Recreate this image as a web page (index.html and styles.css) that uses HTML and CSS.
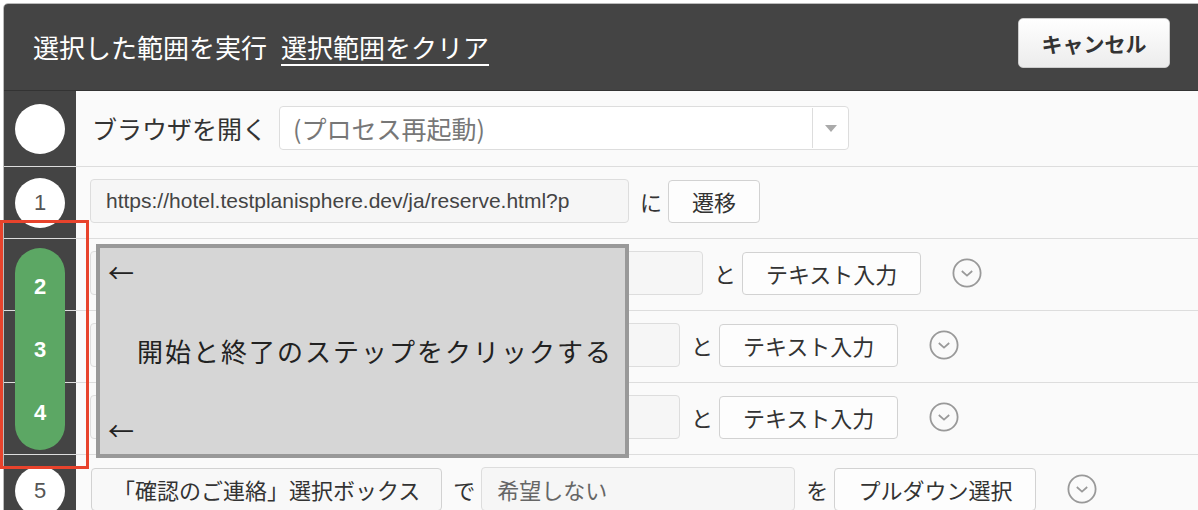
FILE: index.html
```html
<!DOCTYPE html>
<html lang="ja">
<head>
    <meta charset="UTF-8">
    <title>ステップ範囲の選択</title>
    <link rel="stylesheet" href="styles.css">
</head>
<body>
    <div class="panel">
        <header class="bar">
            <span class="bar-title">選択した範囲を実行</span>
            <a class="bar-link" href="#">選択範囲をクリア</a>
            <button class="cancel">キャンセル</button>
        </header>
        <div class="steps">
            <div class="step step-first">
                <div class="step-num"><span class="num-circle"></span></div>
                <div class="step-body">
                    <span class="step-title">ブラウザを開く</span>
                    <div class="select">
                        <span class="select-value">(プロセス再起動)</span>
                        <span class="select-arrow"><i></i></span>
                    </div>
                </div>
            </div>
            <div class="step">
                <div class="step-num"><span class="num-circle">1</span></div>
                <div class="step-body">
                    <div class="field field-url">https://hotel.testplanisphere.dev/ja/reserve.html?p</div>
                    <span class="word">に</span>
                    <button class="action">遷移</button>
                </div>
            </div>
            <!-- steps 2-4 are in the selected range: their numbers sit on the pill -->
            <div class="step">
                <div class="step-num"></div>
                <div class="step-body">
                    <div class="field field-wide"></div>
                    <span class="word">と</span>
                    <button class="action">テキスト入力</button>
                    <svg class="fold" width="30" height="30" viewBox="0 0 30 30"><circle cx="15" cy="15" r="13.6" fill="none" stroke="#999" stroke-width="1.8"/><path d="M9.8 13 L15 17.6 L20.2 13" fill="none" stroke="#999" stroke-width="1.7"/></svg>
                </div>
            </div>
            <div class="step">
                <div class="step-num"></div>
                <div class="step-body">
                    <div class="field field-mid"></div>
                    <span class="word">と</span>
                    <button class="action">テキスト入力</button>
                    <svg class="fold" width="30" height="30" viewBox="0 0 30 30"><circle cx="15" cy="15" r="13.6" fill="none" stroke="#999" stroke-width="1.8"/><path d="M9.8 13 L15 17.6 L20.2 13" fill="none" stroke="#999" stroke-width="1.7"/></svg>
                </div>
            </div>
            <div class="step">
                <div class="step-num"></div>
                <div class="step-body">
                    <div class="field field-mid"></div>
                    <span class="word">と</span>
                    <button class="action">テキスト入力</button>
                    <svg class="fold" width="30" height="30" viewBox="0 0 30 30"><circle cx="15" cy="15" r="13.6" fill="none" stroke="#999" stroke-width="1.8"/><path d="M9.8 13 L15 17.6 L20.2 13" fill="none" stroke="#999" stroke-width="1.7"/></svg>
                </div>
            </div>
            <div class="step">
                <div class="step-num"><span class="num-circle">5</span></div>
                <div class="step-body">
                    <button class="action action-target">「確認のご連絡」選択ボックス</button>
                    <span class="word">で</span>
                    <div class="field field-value">希望しない</div>
                    <span class="word">を</span>
                    <button class="action">プルダウン選択</button>
                    <svg class="fold" width="30" height="30" viewBox="0 0 30 30"><circle cx="15" cy="15" r="13.6" fill="none" stroke="#999" stroke-width="1.8"/><path d="M9.8 13 L15 17.6 L20.2 13" fill="none" stroke="#999" stroke-width="1.7"/></svg>
                </div>
            </div>

            <div class="range-pill">
                <span>2</span>
                <span>3</span>
                <span>4</span>
            </div>
            <div class="range-guide">
                <span class="guide-arrow">←</span>
                <span class="guide-text">開始と終了のステップをクリックする</span>
                <span class="guide-arrow">←</span>
            </div>
        </div>
    </div>
    <div class="range-mark"></div>
</body>
</html>
```

FILE: styles.css
```css
:root {
    --bar-color: #444444;
    --row-background: #fafafa;
    --line-color: #dddddd;
    --text-color: #333;
    --range-green: #5ca764;
    --mark-red: #e8432c;
}
body {
    margin: 0;
    position: relative;
    height: 510px;
    overflow: hidden;
    background-color: #fff;
    color: var(--text-color);
    font-family: "Liberation Sans", "Noto Sans CJK JP", sans-serif;
}
.panel {
    margin: 3px 0 0 3px;
    width: 1200px;
    border: 1px solid #bbb;
    border-radius: 5px 5px 0 0;
    overflow: hidden;
}

/* header bar */
.bar {
    height: 86px;
    background-color: var(--bar-color);
    border-bottom: 1px solid #333;
    display: flex;
    align-items: center;
    padding: 0 34px 0 29px;
}
.bar-title,
.bar-link {
    font-family: "Noto Sans CJK JP", sans-serif;
    font-size: 26px;
    line-height: 30px;
    color: #fff;
}
.bar-link {
    margin-left: 14px;
    text-decoration: underline;
    text-decoration-thickness: 2px;
    text-underline-offset: 6px;
}
.cancel {
    align-self: flex-start;
    margin-top: 14px;
    margin-left: auto;
    width: 152px;
    height: 50px;
    border: 1px solid #ccc;
    border-radius: 5px;
    background: linear-gradient(#ffffff, #ececec);
    font-family: "Noto Sans CJK JP", sans-serif;
    font-size: 21px;
    font-weight: bold;
    line-height: 1;
    color: #333;
    cursor: pointer;
}

/* step rows */
.steps {
    position: relative;
}
.step {
    display: flex;
    height: 71px;
    border-bottom: 1px solid var(--line-color);
}
.step-first {
    height: 75px;
}
.step-num {
    width: 72px;
    flex-shrink: 0;
    background-color: var(--bar-color);
    display: flex;
    align-items: center;
    justify-content: center;
}
.num-circle {
    width: 50px;
    height: 50px;
    border-radius: 50%;
    background-color: #fff;
    display: flex;
    align-items: center;
    justify-content: center;
    font-size: 22px;
    color: #555;
}
.step-body {
    flex: 1;
    box-sizing: border-box;
    padding: 0 0 3px 14px;
    background-color: var(--row-background);
    display: flex;
    align-items: center;
    gap: 6px;
    font-family: "Noto Sans CJK JP", sans-serif;
    font-size: 22px;
    line-height: 1.2;
}
.step-first .step-body {
    padding-bottom: 1px;
}
.step-title {
    margin-left: 2px;
    margin-right: 6px;
    font-size: 25px;
}
.select {
    width: 570px;
    height: 44px;
    box-sizing: border-box;
    border: 1px solid var(--line-color);
    border-radius: 4px;
    background-color: #fff;
    display: flex;
    align-items: center;
}
.select-value {
    flex: 1;
    padding-left: 13px;
    font-size: 25px;
    color: #777;
}
.select-arrow {
    width: 35px;
    height: 40px;
    border-left: 1px solid var(--line-color);
    display: flex;
    align-items: center;
    justify-content: center;
}
.select-arrow i {
    border-left: 6px solid transparent;
    border-right: 6px solid transparent;
    border-top: 7px solid #aaa;
}
.field {
    height: 44px;
    box-sizing: border-box;
    border: 1px solid var(--line-color);
    border-radius: 4px;
    background-color: #f6f6f6;
    padding: 0 15px;
    display: flex;
    align-items: center;
    white-space: nowrap;
    overflow: hidden;
    color: #444;
}
.field-url {
    width: 539px;
    font-family: "Liberation Sans", sans-serif;
    font-size: 21px;
}
.field-wide {
    width: 613px;
}
.field-mid {
    width: 590px;
}
.field-value {
    width: 314px;
    color: #666;
}
.word {
    margin-left: 5px;
    color: #333;
}
.action {
    height: 43px;
    border: 1px solid #d2d2d2;
    border-radius: 4px;
    background-color: #fdfdfd;
    padding: 0 23px;
    font-family: "Noto Sans CJK JP", sans-serif;
    font-size: 22px;
    line-height: 1;
    color: #333;
    cursor: pointer;
}
.action-target {
    margin-left: 1px;
    padding: 0 21px;
    background-color: #f8f8f8;
}
.fold {
    margin-left: 25px;
    flex-shrink: 0;
}

/* selected range */
.range-pill {
    position: absolute;
    left: 11px;
    top: 157px;
    width: 50px;
    height: 202px;
    box-sizing: border-box;
    padding: 26px 0 24px;
    border-radius: 25px;
    background-color: var(--range-green);
    display: flex;
    flex-direction: column;
    justify-content: space-between;
    align-items: center;
    color: #fff;
    font-size: 22px;
    font-weight: bold;
    line-height: 26px;
}
.range-guide {
    position: absolute;
    left: 92px;
    top: 153px;
    width: 533px;
    height: 214px;
    box-sizing: border-box;
    border: 4px solid #999;
    background-color: #d6d6d6;
    padding: 10px 8px;
    display: flex;
    flex-direction: column;
    justify-content: space-between;
    font-family: "Noto Sans CJK JP", sans-serif;
    color: #222;
}
.guide-arrow {
    font-size: 26px;
    line-height: 28px;
}
.guide-text {
    padding-left: 29px;
    font-size: 26px;
    letter-spacing: 2px;
    line-height: 32px;
}
.range-mark {
    position: absolute;
    left: 0;
    top: 220px;
    width: 89px;
    height: 249px;
    box-sizing: border-box;
    border: 3px solid var(--mark-red);
}
```
